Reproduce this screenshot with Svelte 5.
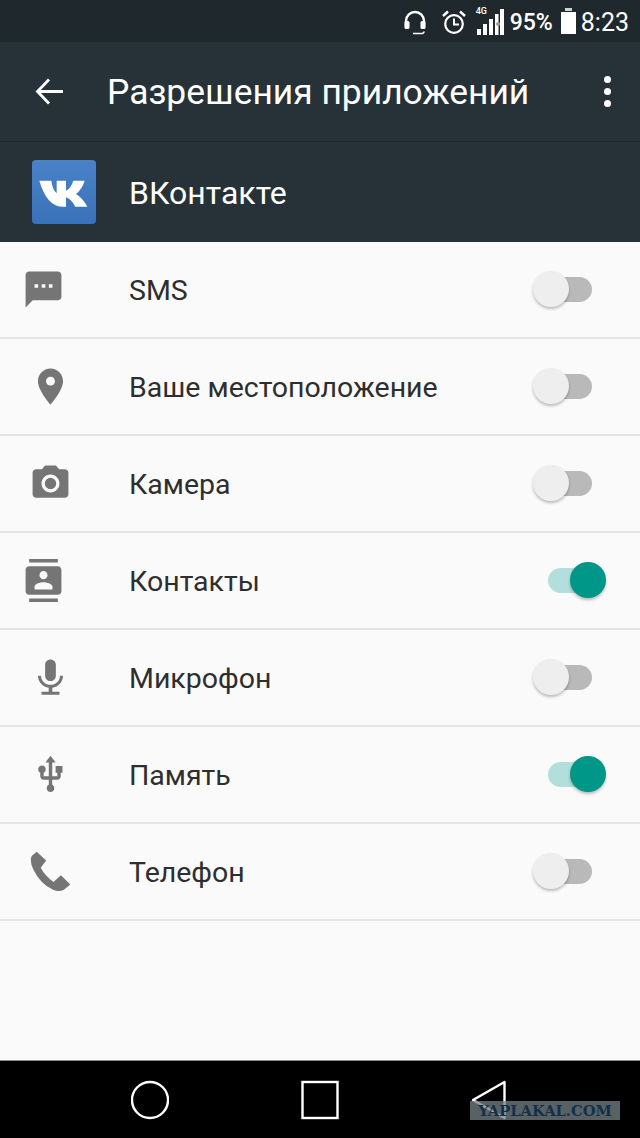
<script lang="ts">
	const rows = [
		{
			label: 'SMS', on: false, left: 22, size: 43, box: '0 0 24 24',
			d: 'M20 2H4c-1.1 0-1.99.9-1.99 2L2 22l4-4h14c1.1 0 2-.9 2-2V4c0-1.1-.9-2-2-2zM9 11H7V9h2v2zm4 0h-2V9h2v2zm4 0h-2V9h2v2z'
		},
		{
			label: 'Ваше местоположение', on: false, left: 29, size: 43, box: '0 0 24 24',
			d: 'M12 2C8.13 2 5 5.13 5 9c0 5.25 7 13 7 13s7-7.75 7-13c0-3.87-3.13-7-7-7zm0 9.5c-1.38 0-2.5-1.12-2.5-2.5s1.12-2.5 2.5-2.5 2.5 1.12 2.5 2.5-1.12 2.5-2.5 2.5z'
		},
		{
			label: 'Камера', on: false, left: 29, size: 43, box: '0 0 24 24',
			d: 'M9 2L7.17 4H4c-1.1 0-2 .9-2 2v12c0 1.1.9 2 2 2h16c1.1 0 2-.9 2-2V6c0-1.1-.9-2-2-2h-3.17L15 2H9zm3 15c-2.76 0-5-2.24-5-5s2.24-5 5-5 5 2.24 5 5-2.24 5-5 5zm0-8.2a3.2 3.2 0 1 0 0 6.4 3.2 3.2 0 0 0 0-6.4z'
		},
		{
			label: 'Контакты', on: true, left: 22, size: 43, box: '0 0 24 24',
			d: 'M20 0H4v2h16V0zM4 24h16v-2H4v2zM20 4H4c-1.1 0-2 .9-2 2v12c0 1.1.9 2 2 2h16c1.1 0 2-.9 2-2V6c0-1.1-.9-2-2-2zm-8 2.75c1.24 0 2.25 1.01 2.25 2.25s-1.01 2.25-2.25 2.25S9.75 10.24 9.75 9 10.76 6.75 12 6.75zM17 17H7v-1.5c0-1.67 3.33-2.5 5-2.5s5 .83 5 2.5V17z'
		},
		{
			label: 'Микрофон', on: false, left: 29, size: 43, box: '0 0 24 24',
			d: 'M12 14c1.66 0 2.99-1.34 2.99-3L15 5c0-1.66-1.34-3-3-3S9 3.34 9 5v6c0 1.66 1.34 3 3 3zm5.3-3c0 3-2.54 5.1-5.3 5.1S6.7 14 6.7 11H5c0 3.41 2.72 6.23 6 6.72V20H7v1.6h10V20h-4v-2.28c3.28-.48 6-3.3 6-6.72h-1.7z'
		},
		{
			label: 'Память', on: true, left: 30, size: 41, box: '0 0 24 24',
			d: 'M15 7v4h1v2h-3V5h2l-3-4-3 4h2v8H8v-2.07c.7-.37 1.2-1.08 1.2-1.93 0-1.21-.99-2.2-2.2-2.2-1.21 0-2.2.99-2.2 2.2 0 .85.5 1.56 1.2 1.93V13c0 1.11.89 2 2 2h3v3.05c-.71.37-1.2 1.1-1.2 1.95 0 1.22.99 2.2 2.2 2.2 1.21 0 2.2-.98 2.2-2.2 0-.85-.49-1.58-1.2-1.95V15h3c1.11 0 2-.89 2-2v-2h1V7h-4z'
		},
		{
			label: 'Телефон', on: false, left: 30, size: 42, box: '90 750 125 125',
			d: 'M110 752L138 778 122 800Q135 825 160 842L182 822 210 850 190 866Q175 872 160 866 120 848 100 805 88 780 95 765Z'
		}
	];
</script>

<div class="screen">
	<header class="status">
		<svg class="headset" viewBox="0 0 22 25" width="22" height="25">
			<path d="M2 17V11a9 9 0 0 1 18 0v6" fill="none" stroke="#fff" stroke-width="2.4" />
			<rect x="0.5" y="11" width="5" height="8" rx="1.5" fill="#fff" />
			<rect x="16.5" y="11" width="5" height="8" rx="1.5" fill="#fff" />
			<path d="M9 23.5h9.5a2 2 0 0 0 1.5-2" fill="none" stroke="#fff" stroke-width="1.6" />
		</svg>
		<svg class="alarm" viewBox="0 0 24 25" width="24" height="25">
			<circle cx="12" cy="14" r="8.8" fill="none" stroke="#fff" stroke-width="2.2" />
			<path d="M12 8.5V14.5H17" fill="none" stroke="#fff" stroke-width="2" />
			<path d="M1 6L6 1.5M23 6L18 1.5" stroke="#fff" stroke-width="2.4" />
		</svg>
		<div class="signal">
			<span class="net">4G</span>
			<svg viewBox="0 0 27 26" width="27" height="26">
				<path d="M0 20h4v6H0zM6 15h4v11H6zM12 10h4v16h-4zM18 5h3.5v21H18zM23 0h4v26h-4z" fill="#fff" />
				<circle cx="21" cy="15" r="2" fill="#9aa0a3" />
			</svg>
		</div>
		<span class="pct">95%</span>
		<div class="battery"></div>
		<span class="time">8:23</span>
	</header>

	<div class="bar">
		<svg class="back" viewBox="0 0 29 27" width="29" height="27">
			<path d="M28 13.5H3M14 1.5L2.5 13.5 14 25.5" fill="none" stroke="#fff" stroke-width="2.8" />
		</svg>
		<h1>Разрешения приложений</h1>
		<div class="more"><i></i><i></i><i></i></div>
	</div>

	<div class="app">
		<div class="logo">
			<svg viewBox="0 0 192 192" width="64" height="64">
				<path d="M22 62H58Q62 90 74 100V62H102V92Q116 86 124 62H158Q150 88 132 102 152 114 166 140H130Q118 118 102 112V140H90Q44 138 22 62Z" fill="#fff" />
			</svg>
		</div>
		<span class="name">ВКонтакте</span>
	</div>

	<main class="list">
		{#each rows as row}
			<div class="row">
				<div class="icon">
					<svg viewBox={row.box} width={row.size} height={row.size} style="margin-left: {row.left}px">
						<path d={row.d} fill="#757575" fill-rule="evenodd" />
					</svg>
				</div>
				<span class="label">{row.label}</span>
				<div class="switch" class:on={row.on}><div class="thumb"></div></div>
			</div>
		{/each}
	</main>

	<nav class="nav">
		<svg viewBox="0 0 38 40" width="38" height="40"><circle cx="19" cy="20" r="18" fill="none" stroke="#fff" stroke-width="2.4" /></svg>
		<svg viewBox="0 0 38 40" width="38" height="40"><rect x="1.5" y="2" width="35" height="36" fill="none" stroke="#fff" stroke-width="2.4" /></svg>
		<svg viewBox="0 0 35 40" width="35" height="40"><path d="M33.5 2V38L2 20Z" fill="none" stroke="#fff" stroke-width="2.4" stroke-linejoin="round" /></svg>
	</nav>
	<div class="mark">YAPLAKAL.COM</div>
</div>

<style>
	:global(body) {
		background: #fafafa;
	}

	.screen {
		position: relative;
		width: 640px;
		height: 1138px;
		display: flex;
		flex-direction: column;
		font-family: Roboto, sans-serif;
		overflow: hidden;
		background: #fafafa;
	}

	.status {
		height: 42px;
		flex: none;
		box-sizing: border-box;
		background: #1f282d;
		color: #fff;
		display: flex;
		align-items: center;
		padding: 2px 11px 0 0;
		justify-content: flex-end;
	}

	.headset {
		margin-right: 16px;
	}

	.alarm {
		margin-right: 11px;
	}

	.signal {
		position: relative;
		height: 26px;
		margin-right: 6px;
	}

	.net {
		position: absolute;
		left: -1px;
		top: -3px;
		font-size: 9px;
		font-weight: 500;
	}

	.pct {
		font-size: 23px;
		font-weight: 500;
		margin-right: 8px;
	}

	.battery {
		width: 15px;
		height: 22px;
		background: #fff;
		margin-right: 5px;
		position: relative;
		border-top: 2px solid #1f282d;
	}

	.battery::before {
		content: '';
		position: absolute;
		left: 4px;
		top: -4px;
		width: 7px;
		height: 3px;
		background: #cfd2d3;
	}

	.time {
		font-size: 25px;
	}

	.bar {
		height: 100px;
		flex: none;
		box-sizing: border-box;
		background: #263238;
		border-bottom: 1px solid #1f292e;
		display: flex;
		align-items: center;
		padding: 0 29px 0 35px;
		color: #fff;
	}

	.bar h1 {
		margin: 0 0 0 43px;
		padding-top: 1px;
		font-size: 35.4px;
		font-weight: 400;
		flex: 1;
		white-space: nowrap;
	}

	.more {
		display: flex;
		flex-direction: column;
		gap: 5px;
	}

	.more i {
		display: block;
		width: 7px;
		height: 7px;
		border-radius: 50%;
		background: #fff;
	}

	.app {
		height: 100px;
		flex: none;
		background: #263238;
		display: flex;
		align-items: center;
		padding-left: 32px;
		color: #fff;
		font-size: 32px;
	}

	.name {
		padding-top: 2px;
	}

	.logo {
		width: 64px;
		height: 64px;
		border-radius: 4px;
		background: linear-gradient(#4a82c8, #3a72b9);
		margin-right: 33px;
		line-height: 0;
	}

	.list {
		flex: 1;
	}

	.row {
		height: 97px;
		box-sizing: border-box;
		border-bottom: 2px solid #e4e4e4;
		display: flex;
		align-items: center;
		color: #2e2e2e;
		font-size: 28.5px;
	}

	.icon {
		width: 129px;
		flex: none;
		line-height: 0;
	}

	.label {
		flex: 1;
		padding-top: 2px;
	}

	.switch {
		position: relative;
		width: 44px;
		height: 25px;
		margin-right: 48px;
		border-radius: 13px;
		background: #b9b9b9;
	}

	.thumb {
		position: absolute;
		left: -15px;
		top: -6px;
		width: 36px;
		height: 36px;
		border-radius: 50%;
		background: #eeeeee;
		box-shadow: 0 2px 3px rgba(0, 0, 0, 0.25);
	}

	.switch.on {
		background: #b2dfdb;
	}

	.switch.on .thumb {
		left: 22px;
		background: #009688;
	}

	.nav {
		height: 78px;
		flex: none;
		box-sizing: border-box;
		background: #000;
		border-top: 1px solid #8a8a8a;
		display: flex;
		align-items: center;
		justify-content: space-between;
		padding: 0 134px 0 131px;
	}

	.mark {
		position: absolute;
		left: 470px;
		top: 1101px;
		width: 150px;
		height: 19px;
		background: rgba(120, 130, 135, 0.75);
		color: #123049;
		font-family: 'DejaVu Serif', serif;
		font-weight: 700;
		font-size: 14.7px;
		line-height: 19px;
		text-align: center;
		white-space: nowrap;
	}
</style>
